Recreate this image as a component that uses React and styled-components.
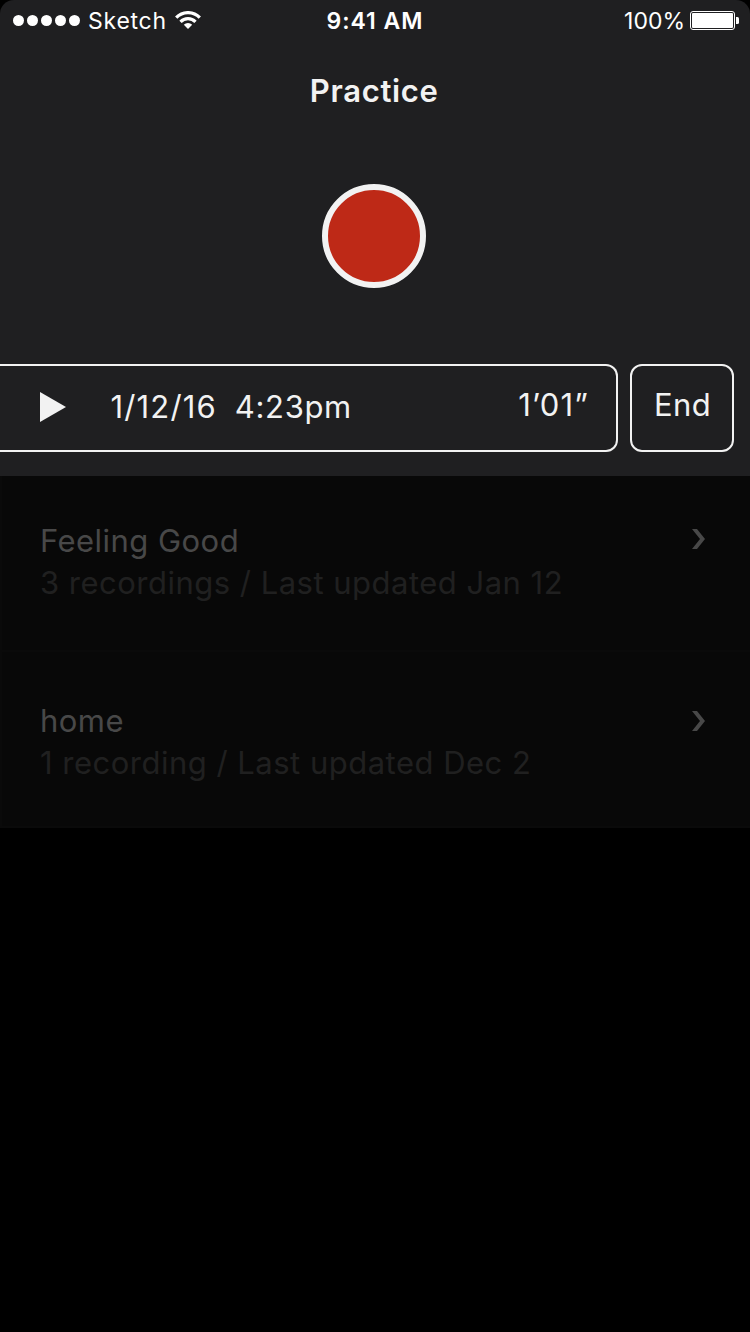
import React from 'react';
import styled, { createGlobalStyle } from 'styled-components';

const color = {
  panel: '#1f1f21',
  light: '#f2f2f2',
  record: '#be2917',
  row: '#080808',
  rowEdge: '#0a0a0a',
  rowTitle: '#484848',
  rowMeta: '#202020',
};

const GlobalStyle = createGlobalStyle`
  * { box-sizing: border-box; }
  body {
    margin: 0;
    background: #000;
    font-family: Inter, "Liberation Sans", sans-serif;
    -webkit-font-smoothing: antialiased;
  }
`;

const Screen = styled.main`
  width: 750px;
  min-height: 1332px;
  background: #000;
  color: ${color.light};
`;

const Panel = styled.section`
  height: 476px;
  background: ${color.panel};
  border-radius: 14px 14px 0 0;
  display: flex;
  flex-direction: column;
`;

const StatusBar = styled.header`
  height: 40px;
  padding: 1px 11px 0 13px;
  display: grid;
  grid-template-columns: 1fr auto 1fr;
  align-items: center;
  color: #fff;
  font-size: 23px;
  line-height: 40px;
  white-space: nowrap;
`;

const StatusGroup = styled.div`
  display: flex;
  align-items: center;
  justify-content: ${(p) => (p.$end ? 'flex-end' : 'flex-start')};

  svg { margin-bottom: 2px; }
`;

const SignalDots = styled.div`
  display: flex;
  gap: 3px;
  margin: 0 8px 2px 0;
`;

const Dot = styled.i`
  width: 11px;
  height: 11px;
  border-radius: 50%;
  background: #fff;
`;

const Carrier = styled.span`
  letter-spacing: 0.76px;
  margin-right: 8px;
`;

const Clock = styled.time`
  margin: 0 1px 0 -1px;
  font-weight: 600;
  letter-spacing: 0.95px;
`;

const BatteryLevel = styled.span`
  letter-spacing: 0;
  margin-right: 5px;
`;

const Title = styled.h1`
  margin: 30px 1.5px 0 0;
  font-size: 31px;
  line-height: 42px;
  font-weight: 600;
  letter-spacing: 0.68px;
  text-align: center;
`;

const RecordButton = styled.button`
  width: 104px;
  height: 104px;
  margin: 72px 0 0 322px;
  padding: 0;
  border: 6px solid ${color.light};
  border-radius: 50%;
  background: ${color.record};
`;

const PlayerRow = styled.div`
  display: flex;
  gap: 12px;
  height: 88px;
  margin: 76px 16px 0 0;
  font-size: 31px;
  line-height: 42px;
  white-space: pre;
`;

const Track = styled.div`
  flex: 1;
  display: flex;
  align-items: flex-start;
  border: 2px solid ${color.light};
  border-left: 0;
  border-radius: 0 12px 12px 0;
  padding: 20px 27px 0 40px;
`;

const PlayIcon = styled.svg`
  display: block;
  width: 26px;
  height: 30px;
  margin: 6px 44.5px 0 0;
`;

const DateText = styled.span`
  letter-spacing: 1.15px;
  margin-right: 18px;
`;

const TimeText = styled.span`
  letter-spacing: 0.65px;
`;

const Duration = styled.span`
  margin: -2px 0 0 auto;
  letter-spacing: 1.12px;
`;

const EndButton = styled.button`
  width: 104px;
  padding: 18px 0 0 22px;
  display: flex;
  align-items: flex-start;
  border: 2px solid ${color.light};
  border-radius: 12px;
  background: none;
  color: inherit;
  font: inherit;
  letter-spacing: 0.4px;
`;

const List = styled.ul`
  margin: 0;
  padding: 0;
  list-style: none;
`;

const Row = styled.li`
  height: 176px;
  padding: ${(p) => (p.$first ? 44 : 48)}px 45px 0 38px;
  display: flex;
  justify-content: space-between;
  background: ${color.row};
  border-left: 2px solid ${color.rowEdge};
  border-bottom: 2px solid ${color.rowEdge};
`;

const RowTitle = styled.div`
  font-size: 31px;
  line-height: 42px;
  letter-spacing: 0.46px;
  color: ${color.rowTitle};
`;

const RowMeta = styled(RowTitle)`
  letter-spacing: 0.49px;
  color: ${color.rowMeta};
`;

const Chevron = styled.svg`
  display: block;
  width: 13px;
  height: 20px;
  margin-top: ${(p) => (p.$first ? 9 : 11)}px;
`;

const songs = [
  { title: 'Feeling Good', meta: '3 recordings / Last updated Jan 12' },
  { title: 'home', meta: '1 recording / Last updated Dec 2' },
];

function Wifi() {
  return (
    <svg width="26" height="18" viewBox="0 0 26 18" fill="none" stroke="#fff" strokeWidth="3.2">
      <path d="M1.2 6.6A16.4 16.4 0 0 1 24.8 6.6" />
      <path d="M5.5 10.8A10.5 10.5 0 0 1 20.5 10.8" />
      <path d="M13 18L8.8 13.8A6 6 0 0 1 17.2 13.8Z" fill="#fff" stroke="none" />
    </svg>
  );
}

function Battery() {
  return (
    <svg width="49" height="19" viewBox="0 0 49 19">
      <rect x="0.5" y="0.5" width="44" height="18" rx="2.5" fill="none" stroke="#fff" />
      <rect x="2" y="2" width="41" height="15" rx="1" fill="#fff" />
      <path d="M46 6h1.5a1.5 1.5 0 0 1 1.5 1.5v4a1.5 1.5 0 0 1-1.5 1.5H46z" fill="#fff" />
    </svg>
  );
}

export default function App() {
  return (
    <Screen>
      <GlobalStyle />
      <Panel>
        <StatusBar>
          <StatusGroup>
            <SignalDots>
              {[0, 1, 2, 3, 4].map((n) => <Dot key={n} />)}
            </SignalDots>
            <Carrier>Sketch</Carrier>
            <Wifi />
          </StatusGroup>
          <Clock>9:41 AM</Clock>
          <StatusGroup $end>
            <BatteryLevel>100%</BatteryLevel>
            <Battery />
          </StatusGroup>
        </StatusBar>
        <Title>Practice</Title>
        <RecordButton aria-label="Record" />
        <PlayerRow>
          <Track>
            <PlayIcon viewBox="0 0 26 30"><path d="M0 0L26 15L0 30Z" fill={color.light} /></PlayIcon>
            <DateText>1/12/16</DateText>
            <TimeText>4:23pm</TimeText>
            <Duration>1’01”</Duration>
          </Track>
          <EndButton>End</EndButton>
        </PlayerRow>
      </Panel>
      <List>
        {songs.map((song, i) => (
          <Row key={song.title} $first={i === 0}>
            <div>
              <RowTitle>{song.title}</RowTitle>
              <RowMeta>{song.meta}</RowMeta>
            </div>
            <Chevron $first={i === 0} viewBox="0 0 13 20">
              <path d="M0 0H5L13 10L5 20H0L8 10Z" fill={color.rowTitle} />
            </Chevron>
          </Row>
        ))}
      </List>
    </Screen>
  );
}
